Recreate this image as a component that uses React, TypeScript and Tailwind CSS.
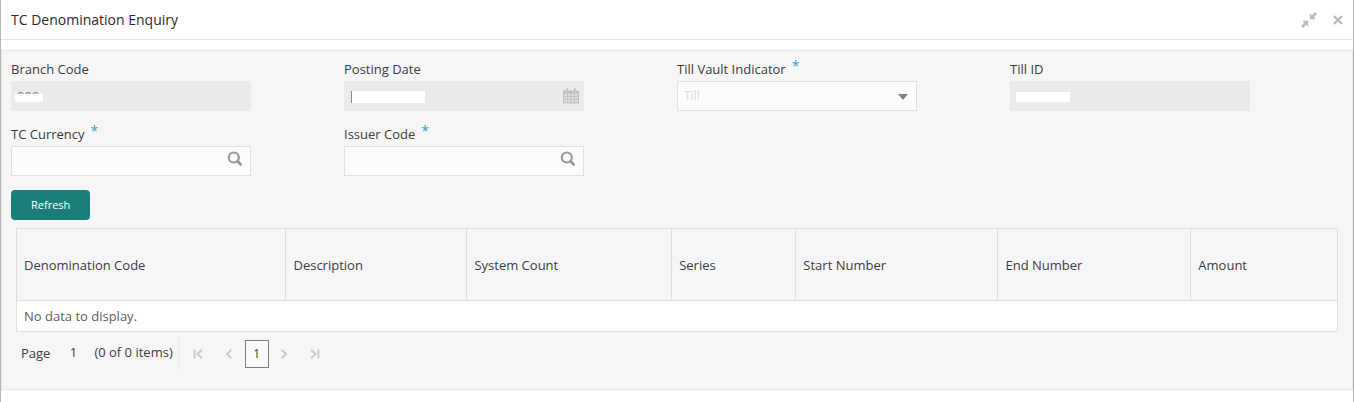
import * as React from 'react';
import { clsx } from 'clsx';

interface FieldProps {
  id: string;
  label: string;
  required?: boolean;
  children: React.ReactNode;
}

interface Column {
  title: string;
  width: string;
}

const COLUMNS: Column[] = [
  { title: 'Denomination Code', width: 'w-[20.4%]' },
  { title: 'Description', width: 'w-[13.7%]' },
  { title: 'System Count', width: 'w-[15.5%]' },
  { title: 'Series', width: 'w-[9.4%]' },
  { title: 'Start Number', width: 'w-[15.3%]' },
  { title: 'End Number', width: 'w-[14.6%]' },
  { title: 'Amount', width: 'w-[11.1%]' },
];

function Field({ id, label, required, children }: FieldProps) {
  return (
    <div>
      <label htmlFor={id} className="flex h-5 items-center gap-1.5 leading-5">
        {label}
        {required && <span className="self-start text-sm leading-3.5 text-[#3a9fc4]">*</span>}
      </label>
      <div className="relative mt-0.5 w-[72%]">{children}</div>
    </div>
  );
}

// White block that hides a sensitive value
function Mask({ className }: { className: string }) {
  return <span aria-hidden="true" className={clsx('pointer-events-none absolute bg-white', className)} />;
}

function ReadOnlyInput({ id, value }: { id: string; value?: string }) {
  return (
    <input
      id={id}
      readOnly
      defaultValue={value}
      className="block h-[30px] w-full bg-[#ebebed] px-1.5 text-[#8a8a8c] outline-none"
    />
  );
}

function SearchInput({ id, label }: { id: string; label: string }) {
  return (
    <>
      <input
        id={id}
        className="block h-[30px] w-full border border-[#e2e2e6] bg-[#fcfcfe] pr-9 pl-1.5 outline-none"
      />
      <button type="button" aria-label={label} className="absolute top-[5px] right-2 text-[#98989a]">
        <svg width="16" height="16" viewBox="0 0 16 16" fill="none" stroke="currentColor">
          <circle cx="6.8" cy="6.5" r="5" strokeWidth="2.2" />
          <path d="M10.6 10.3L13.6 13.4" strokeWidth="2.8" strokeLinecap="round" />
        </svg>
      </button>
    </>
  );
}

function CalendarIcon() {
  return (
    <svg width="16" height="16" viewBox="0 0 16 16" fill="none">
      <path d="M0 2.5h16V15.5H0z" fill="#bfbfc1" />
      <path d="M3.2 0.3h2v3.2h-2zM10.8 0.3h2v3.2h-2z" fill="#b4b4b6" stroke="#ebebed" strokeWidth="0.5" />
      <path
        d="M1.2 5.5h2.7v2.5H1.2zM4.8 5.5h2.7v2.5H4.8zM8.4 5.5h2.7v2.5H8.4zM12 5.5h2.7v2.5H12zM1.2 8.8h2.7v2.4H1.2zM4.8 8.8h2.7v2.4H4.8zM8.4 8.8h2.7v2.4H8.4zM12 8.8h2.7v2.4H12zM1.2 12h2.7v2.4H1.2zM4.8 12h2.7v2.4H4.8zM8.4 12h2.7v2.4H8.4zM12 12h2.7v2.4H12z"
        fill="#dededf"
      />
    </svg>
  );
}

function PagerButton({ label, path }: { label: string; path: string }) {
  return (
    <button type="button" aria-label={label} className="flex h-7 w-[31px] items-center justify-center text-[#cbcbcd]">
      <svg width="10" height="10" viewBox="0 0 10 10" fill="none" stroke="currentColor" strokeWidth="1.9">
        <path d={path} />
      </svg>
    </button>
  );
}

function Pager() {
  return (
    <nav aria-label="Pagination" className="mt-1 ml-2.5 flex h-[34px] items-center">
      <label htmlFor="page" className="leading-5">
        Page
      </label>
      <input id="page" defaultValue="1" className="ml-2 w-[30px] bg-transparent text-center outline-none" />
      <span className="ml-1.5 pr-[5px] whitespace-nowrap">(0 of 0 items)</span>
      <div className="flex h-full items-center border-l border-[#ebebed] pt-0.5 pl-1">
        <PagerButton label="First page" path="M1.6 0.6v8.8M9 0.8L4.4 5l4.6 4.2" />
        <PagerButton label="Previous page" path="M7.4 0.8L3 5l4.4 4.2" />
        <button type="button" className="h-7 w-6 border border-[#7c7c7e] bg-[#fafafa] text-xs">
          1
        </button>
        <PagerButton label="Next page" path="M2.6 0.8L7 5l-4.4 4.2" />
        <PagerButton label="Last page" path="M8.4 0.6v8.8M1 0.8L5.6 5L1 9.2" />
      </div>
    </nav>
  );
}

export default function App() {
  return (
    <main className="min-h-screen border-x border-[#b4b4b6] bg-white font-['Open_Sans','Noto_Sans',sans-serif] text-[13px] text-[#3c3c3e]">
      <header className="flex h-10 items-center justify-between border-b border-[#e6e6e8] pr-2.5 pl-2.5">
        <h1 className="text-sm text-[#2a2a2c]">TC Denomination Enquiry</h1>
        <div className="flex items-center gap-4 text-[#bcbcbe]">
          <button type="button" aria-label="Collapse">
            <svg width="16" height="16" viewBox="0 0 16 16" fill="currentColor">
              <path d="M8.8 1.2v6h6l-2-2L16 2 14 0l-3.2 3.2zM7.2 14.8v-6h-6l2 2L0 14l2 2 3.2-3.2z" />
            </svg>
          </button>
          <button type="button" aria-label="Close">
            <svg width="10" height="10" viewBox="0 0 10 10" stroke="currentColor" strokeWidth="2.4">
              <path d="M1 1l8 8M9 1L1 9" />
            </svg>
          </button>
        </div>
      </header>

      <section className="mt-2.5 border border-[#e9e9eb] bg-[#f6f6f6] px-[9px] pt-2 pb-[19px]">
        <form onSubmit={(event) => event.preventDefault()}>
          <div className="grid grid-cols-4 gap-y-[13px]">
            <Field id="branch" label="Branch Code">
              <ReadOnlyInput id="branch" value="000" />
              <Mask className="top-[13px] left-1 h-2 w-7" />
            </Field>
            <Field id="date" label="Posting Date">
              <ReadOnlyInput id="date" />
              <Mask className="top-2.5 left-[7px] h-3 w-[74px] border-l border-[#8a8a8c]" />
              <span className="absolute top-[7px] right-[5px]">
                <CalendarIcon />
              </span>
            </Field>
            <Field id="indicator" label="Till Vault Indicator" required>
              <select
                id="indicator"
                className="block h-[30px] w-full appearance-none border border-[#e2e2e6] bg-[#fcfcfe] px-1.5 text-xs text-[#dcdcde] outline-none"
              >
                <option>Till</option>
              </select>
              <svg
                width="10"
                height="6"
                viewBox="0 0 10 6"
                className="pointer-events-none absolute top-[13px] right-[9px] text-[#828284]"
              >
                <path d="M0 0h10L5 6z" fill="currentColor" />
              </svg>
            </Field>
            <Field id="till" label="Till ID">
              <ReadOnlyInput id="till" />
              <Mask className="top-[11px] left-1.5 h-2.5 w-[54px]" />
            </Field>
            <Field id="currency" label="TC Currency" required>
              <SearchInput id="currency" label="Search currency" />
            </Field>
            <Field id="issuer" label="Issuer Code" required>
              <SearchInput id="issuer" label="Search issuer" />
            </Field>
          </div>
          <button type="submit" className="mt-3.5 block h-[30px] rounded-sm bg-[#1b7f79] px-5 text-[11px] text-white">
            Refresh
          </button>
        </form>

        <div className="mt-2 px-[5px]">
          <table className="w-full table-fixed border-collapse border border-[#e0e0e3] text-left">
            <thead className="bg-[#f6f6f8]">
              <tr className="h-[72px]">
                {COLUMNS.map((column) => (
                  <th key={column.title} scope="col" className={clsx('border border-[#e0e0e3] px-[7px] pt-0.5 font-normal', column.width)}>
                    {column.title}
                  </th>
                ))}
              </tr>
            </thead>
            <tbody className="bg-white">
              <tr className="h-[31px]">
                <td colSpan={COLUMNS.length} className="px-[7px] pt-0.5 text-[#606062]">
                  No data to display.
                </td>
              </tr>
            </tbody>
          </table>
        </div>

        <Pager />
      </section>
    </main>
  );
}
